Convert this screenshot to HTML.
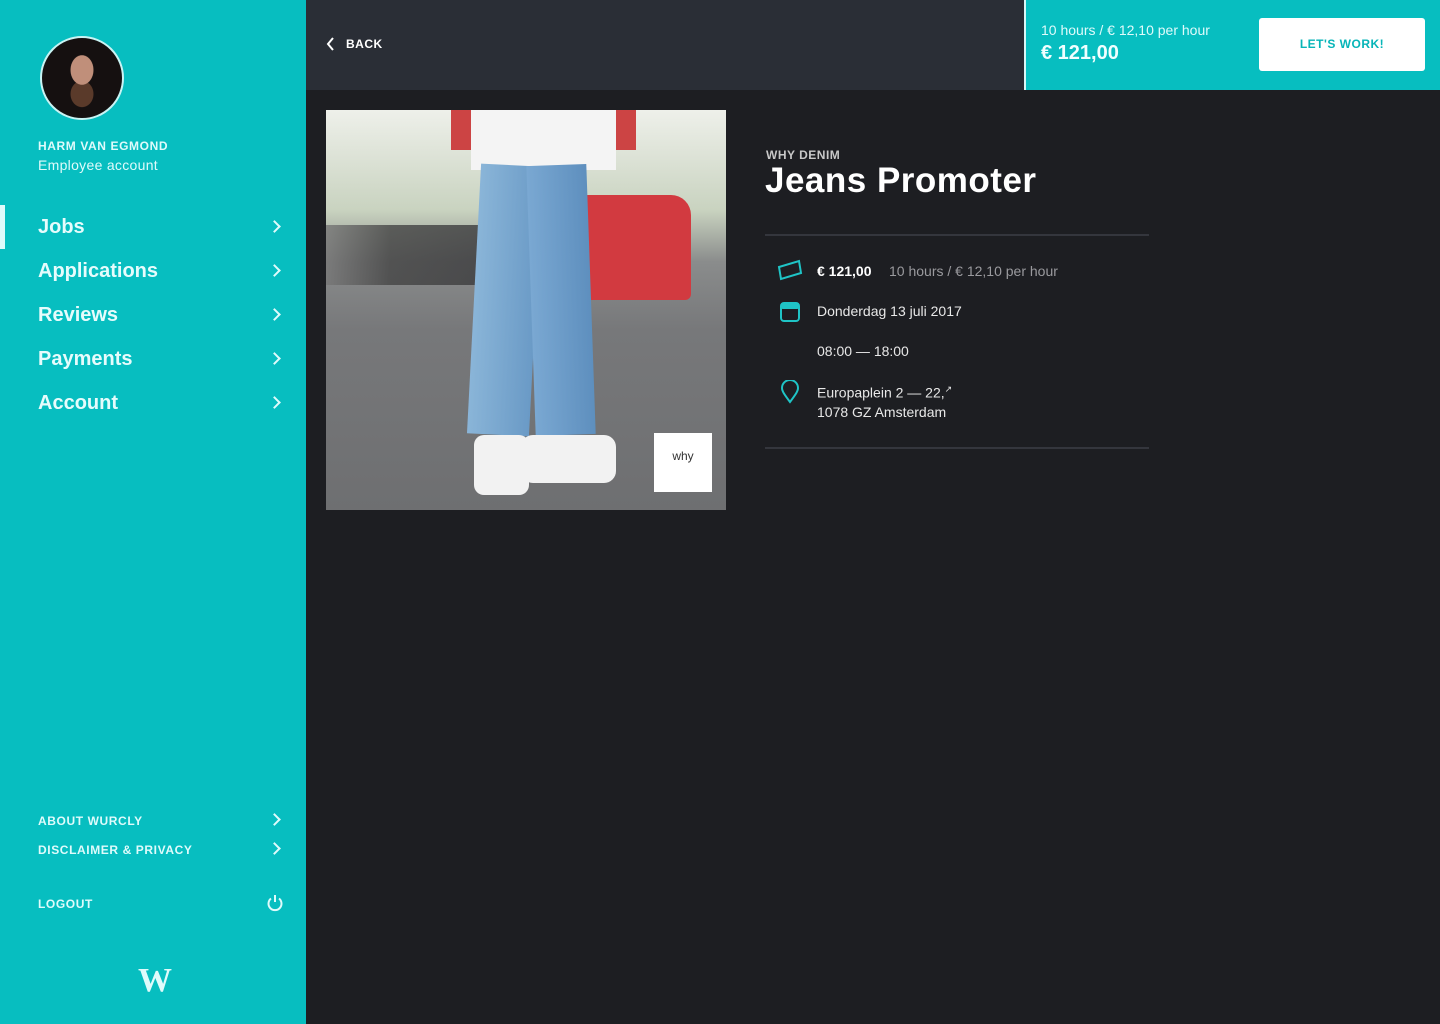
<!DOCTYPE html>
<html><head><meta charset="utf-8"><style>
*{margin:0;padding:0;box-sizing:border-box}
body{width:1440px;height:1024px;background:#1d1e22;font-family:"Liberation Sans",sans-serif;position:relative;overflow:hidden}
.side{position:absolute;left:0;top:0;width:306px;height:1024px;background:#07bec0;color:#dffbfb}
.av{position:absolute;left:40px;top:36px;width:84px;height:84px;border-radius:50%;border:2px solid #c9f4f4;background:radial-gradient(ellipse 14px 18px at 50% 40%,#c08f7a 80%,transparent 84%),radial-gradient(ellipse 14px 16px at 50% 70%,#5a3a2a 80%,transparent 84%),#151010}
.abs{position:absolute}
.nav{position:absolute;left:38px;font-size:20px;font-weight:bold;color:#e6fcfc}
.chev{position:absolute;left:270px;width:9px;height:9px;border-right:2px solid #dffbfb;border-top:2px solid #dffbfb;transform:rotate(45deg)}
.small{position:absolute;left:38px;font-size:12px;font-weight:bold;letter-spacing:.6px}
.top{position:absolute;left:306px;top:0;width:718px;height:90px;background:#2a2e36}
.price{position:absolute;left:1024px;top:0;width:416px;height:90px;background:#07bec0;border-left:2px solid #d8f6f6}
.btn{position:absolute;left:1259px;top:18px;width:166px;height:53px;background:#fff;border-radius:3px;color:#07b5b8;font-size:12px;font-weight:bold;text-align:center;line-height:53px;letter-spacing:.5px}
.photo{position:absolute;left:326px;top:110px;width:400px;height:400px;overflow:hidden;background:linear-gradient(#eef0ea 0,#c9d3c0 25%,#8a8c8c 38%,#77787a 55%,#6e6f71 100%)}
.line{position:absolute;left:765px;width:384px;height:2px;background:#34363d}
.t{position:absolute;color:#e8e8e8;font-size:14px}
</style></head><body>
<div class="side">
 <div class="av"></div>
 <div class="abs" style="left:38px;top:139px;font-size:12px;font-weight:bold;letter-spacing:.6px">HARM VAN EGMOND</div>
 <div class="abs" style="left:38px;top:157px;font-size:14px;letter-spacing:.3px">Employee account</div>
 <div class="abs" style="left:0;top:205px;width:5px;height:44px;background:#dffbfb"></div>
 <div class="nav" style="top:216px">Jobs</div><div class="chev" style="top:222px"></div>
 <div class="nav" style="top:260px">Applications</div><div class="chev" style="top:266px"></div>
 <div class="nav" style="top:304px">Reviews</div><div class="chev" style="top:310px"></div>
 <div class="nav" style="top:348px">Payments</div><div class="chev" style="top:354px"></div>
 <div class="nav" style="top:392px">Account</div><div class="chev" style="top:398px"></div>
 <div class="small" style="top:814px">ABOUT WURCLY</div><div class="chev" style="top:815px"></div>
 <div class="small" style="top:843px">DISCLAIMER &amp; PRIVACY</div><div class="chev" style="top:844px"></div>
 <div class="small" style="top:897px">LOGOUT</div>
 <svg class="abs" style="left:266px;top:894px" width="18" height="18" viewBox="0 0 18 18" fill="none" stroke="#dffbfb" stroke-width="2"><path d="M5 4.5A6.5 6.5 0 1 0 13 4.5"/><path d="M9 1v7"/></svg>
 <div class="abs" style="left:138px;top:962px;font-family:'Liberation Serif',serif;font-size:34px;font-weight:bold;color:#dffbfb">W</div>
</div>
<div class="top">
 <svg class="abs" style="left:20px;top:37px" width="10" height="14" viewBox="0 0 10 14" fill="none" stroke="#fff" stroke-width="2"><path d="M7 1L2 7l5 6"/></svg>
 <div class="abs" style="left:40px;top:37px;color:#fff;font-size:12px;font-weight:bold;letter-spacing:.5px">BACK</div>
</div>
<div class="price">
 <div class="abs" style="left:15px;top:22px;color:#dffbfb;font-size:14px">10 hours / € 12,10 per hour</div>
 <div class="abs" style="left:15px;top:42px;color:#f0ffff;font-size:20px;font-weight:bold">€ 121,00</div>
</div>
<div class="btn">LET'S WORK!</div>
<div class="photo">
 <div class="abs" style="left:0;top:115px;width:160px;height:60px;background:linear-gradient(90deg,#777 0,#444 40%,#3a3a3c 100%);opacity:.8"></div>
 <div class="abs" style="left:200px;top:85px;width:165px;height:105px;background:#d23a40;border-radius:20px 20px 6px 6px"></div>
 <div class="abs" style="left:125px;top:0;width:185px;height:40px;background:#c44;"></div>
 <div class="abs" style="left:145px;top:0;width:145px;height:60px;background:#f4f4f4"></div>
 <div class="abs" style="left:148px;top:55px;width:62px;height:270px;background:linear-gradient(90deg,#8ab5d8,#6a9ac6);transform:rotate(3deg)"></div>
 <div class="abs" style="left:205px;top:55px;width:60px;height:270px;background:linear-gradient(90deg,#7aa8d2,#5e8fbe);transform:rotate(-2deg)"></div>
 <div class="abs" style="left:148px;top:325px;width:55px;height:60px;background:#f2f2f2;border-radius:10px"></div>
 <div class="abs" style="left:195px;top:325px;width:95px;height:48px;background:#f2f2f2;border-radius:12px"></div>
 <div class="abs" style="left:328px;top:323px;width:58px;height:59px;background:#fff;color:#333;font-size:12px;text-align:center;line-height:46px">why</div>
</div>
<div class="abs" style="left:766px;top:148px;color:#c8c8c8;font-size:12px;font-weight:bold;letter-spacing:.5px">WHY DENIM</div>
<div class="abs" style="left:765px;top:161px;color:#fff;font-size:35px;font-weight:bold;letter-spacing:.5px">Jeans Promoter</div>
<div class="line" style="top:234px"></div>
<svg class="abs" style="left:777px;top:259px" width="26" height="22" viewBox="0 0 26 22" fill="none" stroke="#1fc4c6" stroke-width="2"><path d="M2 8L22 2l2 12-20 6z"/></svg>
<div class="t" style="left:817px;top:263px;font-weight:bold;color:#fff">€ 121,00</div>
<div class="t" style="left:889px;top:263px;color:#9a9a9e">10 hours / € 12,10 per hour</div>
<svg class="abs" style="left:780px;top:302px" width="20" height="20" viewBox="0 0 20 20"><rect x="1" y="1" width="18" height="18" rx="3" fill="none" stroke="#1fc4c6" stroke-width="2"/><rect x="1" y="1" width="18" height="6" rx="2" fill="#1fc4c6"/></svg>
<div class="t" style="left:817px;top:303px">Donderdag 13 juli 2017</div>
<div class="t" style="left:817px;top:343px">08:00 — 18:00</div>
<svg class="abs" style="left:780px;top:380px" width="20" height="24" viewBox="0 0 20 24" fill="none" stroke="#1fc4c6" stroke-width="2"><path d="M10 22C4 14 2 11 2 8a8 8 0 0 1 16 0c0 3-2 6-8 14z"/></svg>
<div class="t" style="left:817px;top:384px">Europaplein 2 — 22,<sup style="font-size:9px">↗</sup></div>
<div class="t" style="left:817px;top:404px">1078 GZ Amsterdam</div>
<div class="line" style="top:447px"></div>
</body></html>
